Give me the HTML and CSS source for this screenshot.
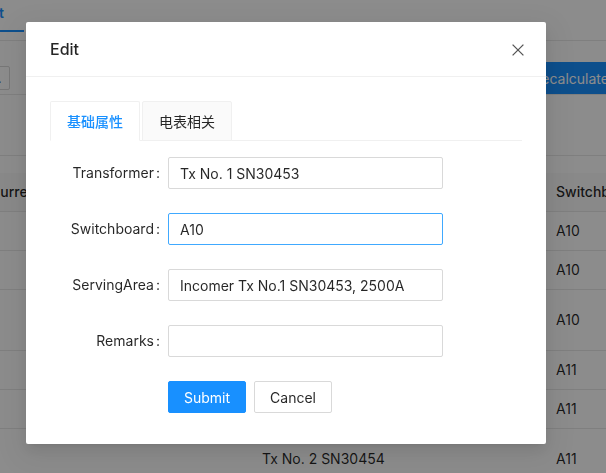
FILE: index.html
```html
<!DOCTYPE html>
<html lang="en">
<head>
<meta charset="utf-8">
<title>Edit</title>
<link rel="stylesheet" href="styles.css">
</head>
<body>
<div class="page">
  <div class="topnav"><div class="navtab">List</div></div>
  <div class="toolbar">
    <button class="tb-btn">Export .</button>
    <button class="tb-primary">Recalculate</button>
  </div>
  <div class="filter"></div>
  <div class="table">
    <div class="tr th"><div class="td">Current</div><div class="td"></div><div class="td">Switchboard</div><div class="td">ServingArea</div></div>
    <div class="tr"><div class="td"></div><div class="td"></div><div class="td">A10</div><div class="td">Incomer Tx No.1</div></div>
    <div class="tr"><div class="td"></div><div class="td"></div><div class="td">A10</div><div class="td">Incomer Tx No.1</div></div>
    <div class="tr"><div class="td"></div><div class="td"></div><div class="td">A10</div><div class="td">Incomer Tx No.1<br>SN30453, 2500A</div></div>
    <div class="tr"><div class="td"></div><div class="td"></div><div class="td">A11</div><div class="td">Incomer Tx No.2</div></div>
    <div class="tr"><div class="td"></div><div class="td"></div><div class="td">A11</div><div class="td">Incomer Tx No.2</div></div>
    <div class="tr"><div class="td"></div><div class="td">Tx No. 2 SN30454</div><div class="td">A11</div><div class="td">Incomer Tx No.2<br>SN30454, 2500A</div></div>
  </div>
</div>
<div class="mask"></div>
<div class="modal">
  <div class="modal-header">
    <div class="modal-title">Edit</div>
    <button class="modal-close" aria-label="Close">
      <svg width="12" height="12" viewBox="0 0 12 12"><path d="M0.6 0.6 L11.4 11.4 M11.4 0.6 L0.6 11.4" stroke="#555" stroke-width="1.3" fill="none"/></svg>
    </button>
  </div>
  <div class="modal-body">
    <div class="tabs-bar">
      <div class="tab active">基础属性</div>
      <div class="tab">电表相关</div>
    </div>
    <form class="form">
      <div class="form-row"><label class="form-label">Transformer</label><input class="input" value="Tx No. 1 SN30453"></div>
      <div class="form-row"><label class="form-label">Switchboard</label><input class="input focused" value="A10"></div>
      <div class="form-row"><label class="form-label">ServingArea</label><input class="input" value="Incomer Tx No.1 SN30453, 2500A"></div>
      <div class="form-row"><label class="form-label">Remarks</label><input class="input" value=""></div>
      <div class="form-actions">
        <button type="button" class="btn btn-primary">Submit</button>
        <button type="button" class="btn">Cancel</button>
      </div>
    </form>
  </div>
</div>
</body>
</html>
```
FILE: styles.css
```css
* { box-sizing: border-box; }
html, body { margin: 0; padding: 0; }
body {
  width: 606px;
  height: 473px;
  overflow: hidden;
  font-family: Inter, "Noto Sans CJK SC", sans-serif;
  font-size: 14px;
  color: rgba(0,0,0,.85);
  background: #fff;
}
.page {
  width: 606px;
  height: 473px;
  overflow: hidden;
  background: #fff;
}
.topnav {
  height: 41px;
  border-bottom: 1px solid #e8e8e8;
  display: flex;
}
.navtab {
  width: 56px;
  margin-left: -32px;
  padding-right: 20px;
  text-align: right;
  height: 32px;
  line-height: 26px;
  color: #1890ff;
  font-weight: 600;
  border-bottom: 2px solid #1890ff;
}
.toolbar {
  height: 54px;
  padding-top: 21px;
  border-bottom: 1px solid #e8e8e8;
  display: flex;
  align-items: center;
}
.tb-btn {
  width: 60px;
  height: 24px;
  margin-left: -47px;
  padding: 0 8px 0 0;
  text-align: right;
  font: inherit;
  font-size: 13px;
  background: #fff;
  border: 1px solid #d9d9d9;
  border-radius: 2px;
  color: rgba(0,0,0,.85);
  white-space: nowrap;
}
.tb-primary {
  margin-left: 506px;
  height: 32px;
  flex: none;
  padding: 0 15px;
  font: inherit;
  font-size: 14px;
  color: #fff;
  background: #1890ff;
  border: 1px solid #1890ff;
  border-radius: 2px;
}
.filter {
  height: 61px;
  border-bottom: 1px solid #e8e8e8;
}
.table {
  margin-top: 17px;
  margin-left: -26px;
  width: 900px;
}
.tr {
  display: grid;
  grid-template-columns: 272px 294px 134px 200px;
  align-items: center;
  border-bottom: 1px solid #e8e8e8;
}
.td {
  padding: 8px 16px;
  line-height: 22px;
  min-height: 38px;
  white-space: nowrap;
}
.th { background: #fafafa; font-weight: 500; }

.mask {
  position: fixed;
  inset: 0;
  background: rgba(0,0,0,.45);
}
.modal {
  position: absolute;
  left: 26px;
  top: 22px;
  width: 520px;
  background: #fff;
  border-radius: 2px;
  box-shadow: 0 3px 6px -4px rgba(0,0,0,.12), 0 6px 16px 0 rgba(0,0,0,.08), 0 9px 28px 8px rgba(0,0,0,.05);
}
.modal-header {
  position: relative;
  padding: 16px 24px;
  border-bottom: 1px solid #f0f0f0;
}
.modal-title {
  font-size: 16px;
  line-height: 22px;
  font-weight: 500;
  color: rgba(0,0,0,.85);
}
.modal-close {
  position: absolute;
  top: 0;
  right: 0;
  width: 56px;
  height: 56px;
  padding: 0;
  border: 0;
  background: transparent;
  display: flex;
  align-items: center;
  justify-content: center;
}
.modal-body {
  padding: 24px 24px 31px;
}
.tabs-bar {
  display: flex;
  gap: 2px;
  border-bottom: 1px solid #f0f0f0;
  margin-bottom: 16px;
}
.tab {
  height: 40px;
  margin-bottom: -1px;
  padding: 0 16px;
  line-height: 38px;
  border: 1px solid #f0f0f0;
  border-radius: 2px 2px 0 0;
  background: #fafafa;
  color: rgba(0,0,0,.85);
  font-family: "Noto Sans CJK SC", sans-serif;
  font-size: 14px;
}
.tab.active {
  background: #fff;
  border-bottom-color: #fff;
  color: #1890ff;
  font-weight: 500;
}
.form { margin: 0; }
.form-row {
  display: grid;
  grid-template-columns: 118px 275px;
  height: 32px;
  margin-bottom: 24px;
}
.form-label {
  text-align: right;
  line-height: 32px;
  color: rgba(0,0,0,.85);
  white-space: nowrap;
}
.form-label::after {
  content: ":";
  position: relative;
  top: -0.5px;
  margin: 0 8px 0 2px;
}
.input {
  width: 275px;
  height: 32px;
  padding: 4px 11px;
  font: inherit;
  font-size: 14px;
  color: rgba(0,0,0,.85);
  border: 1px solid #d9d9d9;
  border-radius: 2px;
  background: #fff;
  outline: none;
}
.input.focused {
  border-color: #40a9ff;
}
.form-actions {
  display: flex;
  gap: 8px;
  margin-left: 118px;
  height: 32px;
}
.btn {
  height: 32px;
  padding: 0 15px;
  font: inherit;
  font-size: 14px;
  color: rgba(0,0,0,.85);
  background: #fff;
  border: 1px solid #d9d9d9;
  border-radius: 2px;
}
.btn-primary {
  color: #fff;
  background: #1890ff;
  border-color: #1890ff;
}
```
